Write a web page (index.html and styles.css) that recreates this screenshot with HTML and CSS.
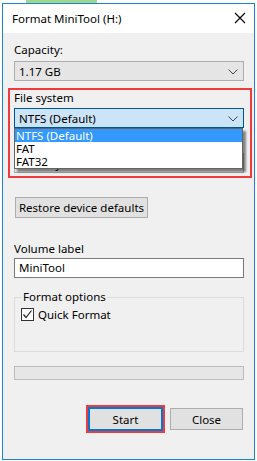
FILE: index.html
```html
<!DOCTYPE html>
<html>
	<head>
		<meta charset="UTF-8">
		<title>Format MiniTool (H:)</title>
		<link rel="stylesheet" href="styles.css">
	</head>
	<body>
		<div class="strip"></div>
		<div class="win">
			<div class="titlebar">
				<span class="title">Format MiniTool (H:)</span>
				<svg class="close" width="12" height="12" viewBox="0 0 12 12"><path d="M1 1L11 11M11 1L1 11" stroke="#000" stroke-width="1.1" fill="none"/></svg>
			</div>
			<div class="content">
				<div class="lbl">Capacity:</div>
				<div class="combo">
					<span>1.17 GB</span>
					<svg class="chev" width="10" height="6" viewBox="0 0 10 6"><path d="M0.5 0.5L5 5L9.5 0.5" stroke="#444" fill="none"/></svg>
				</div>
				<div class="mark">
					<div class="lbl">File system</div>
					<div class="combo combo-on">
						<span>NTFS (Default)</span>
						<svg class="chev" width="10" height="6" viewBox="0 0 10 6"><path d="M0.5 0.5L5 5L9.5 0.5" stroke="#444" fill="none"/></svg>
					</div>
					<div class="lbl lbl-alloc">Allocation unit size</div>
					<div class="combo"><span>4096 bytes</span></div>
					<ul class="list">
						<li class="sel">NTFS (Default)</li>
						<li>FAT</li>
						<li>FAT32</li>
					</ul>
				</div>
				<button class="btn btn-restore">Restore device defaults</button>
				<div class="lbl lbl-vol">Volume label</div>
				<div class="field">MiniTool</div>
				<fieldset class="group">
					<legend>Format options</legend>
					<div class="check">
						<svg width="13" height="13" viewBox="0 0 13 13"><rect x="0.5" y="0.5" width="12" height="12" fill="#fff" stroke="#333"/><path d="M2.5 6.5L5 9.5L10.5 2.5" stroke="#222" stroke-width="1.2" fill="none"/></svg>
						<span>Quick Format</span>
					</div>
				</fieldset>
				<div class="progress"></div>
				<div class="actions">
					<div class="mark-btn"><button class="btn btn-start">Start</button></div>
					<button class="btn btn-close">Close</button>
				</div>
			</div>
		</div>
	</body>
</html>
```
FILE: styles.css
```css
*{
	margin:0;
	padding:0;
	box-sizing:border-box;
}
ul,li{
	list-style:none;
}
body{
	background:#fff;
	font-family:"Noto Sans","Liberation Sans",sans-serif;
	font-size:11.5px;
	color:#000;
}
.strip{
	width:71px;
	height:3px;
	margin-left:26px;
	background:#9fd88a;
}
.win{
	width:253px;
	height:457px;
	margin-left:2px;
	border:1px solid #1c84d8;
	background:#f0f0f0;
	display:flex;
	flex-direction:column;
}
.titlebar{
	height:29px;
	background:#fff;
	display:flex;
	align-items:center;
	justify-content:space-between;
	padding:0 8px 1px 9px;
}
.title{
	font-size:11.5px;
}
.content{
	padding:9px 10px 0 11px;
}
.lbl{
	line-height:16px;
	height:16px;
}
.combo{
	height:20px;
	margin-top:3px;
	border:1px solid #adadad;
	background:#e5e5e5;
	display:flex;
	align-items:center;
	justify-content:space-between;
	padding:0 5px 0 4px;
}
.combo-on{
	background:#cce4f7;
	border-color:#005499;
	margin-top:2px;
}
.chev{
	margin-top:1px;
}
.mark{
	position:relative;
	margin:7px -8px 0 -6px;
	padding:0 6px 3px 4px;
	border:2px solid #ee3b3b;
}
.lbl-alloc{
	margin-top:6px;
}
.list{
	position:absolute;
	left:4px;
	top:38px;
	width:229px;
	border:1px solid #646464;
	background:#fff;
	box-shadow:3px 3px 2px rgba(0,0,0,0.45);
}
.list li{
	height:13px;
	line-height:13px;
	padding-left:1px;
}
.list .sel{
	background:#3399ff;
	color:#fff;
}
.btn{
	font-family:inherit;
	font-size:11.5px;
	color:#000;
	background:#e1e1e1;
	border:1px solid #adadad;
	height:21px;
}
.btn-restore{
	display:block;
	width:133px;
	margin:19px 0 0 1px;
}
.lbl-vol{
	margin-top:23px;
}
.field{
	height:20px;
	margin-top:1px;
	border:1px solid #7a7a7a;
	background:#fff;
	padding-left:4px;
	line-height:18px;
}
.group{
	margin-top:12px;
	height:62px;
	border:1px solid #dcdcdc;
	padding:0 0 0 6px;
}
.group legend{
	padding:0 1px;
	margin-left:1px;
	line-height:14px;
}
.check{
	display:flex;
	align-items:center;
	gap:4px;
	margin-top:3px;
}
.check svg{
	display:block;
}
.progress{
	margin-top:14px;
	height:14px;
	border:1px solid #bcbcbc;
	background:#e6e6e6;
}
.actions{
	display:flex;
	justify-content:flex-end;
	align-items:center;
	gap:5px;
	margin-top:25px;
	padding-right:1px;
}
.mark-btn{
	border:2px solid #ee3b3b;
	width:79px;
	height:28px;
}
.btn-start{
	display:block;
	width:75px;
	height:24px;
	border:2px solid #0078d7;
}
.btn-close{
	width:73px;
	height:22px;
}
```
